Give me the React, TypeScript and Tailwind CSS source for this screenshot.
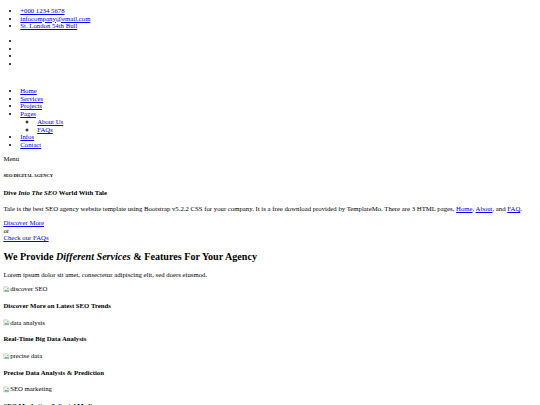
import React from "react";

const link = "text-[#0000ee] underline";

// chrome's broken image icon, shrunk
function BrokenImg({ alt }: { alt: string }) {
  return (
    <span className="inline">
      <svg
        viewBox="0 0 16 16"
        className="inline-block w-[1em] h-[1em] align-[-0.2em]"
      >
        <path d="M2 2h9l3 3v9H2z" fill="#f4f4f4" stroke="#9a9a9a" strokeWidth="1" />
        <path d="M3 13l4-5 3 3 2-2 2 4z" fill="#4caf50" />
        <circle cx="11" cy="6" r="1.5" fill="#6ea6d8" />
      </svg>
      {alt}
    </span>
  );
}

const services = [
  { img: "discover SEO", title: "Discover More on Latest SEO Trends" },
  { img: "data analysis", title: "Real-Time Big Data Analysis" },
  { img: "precise data", title: "Precise Data Analysis & Prediction" },
  { img: "SEO marketing", title: "SEO Marketing & Social Media" },
];

export default function App() {
  return (
    <div className="px-[0.5em] pb-[0.5em] font-['Liberation_Serif',serif] text-[6.75px] leading-[1.15] text-black bg-white min-h-screen">
      {/* pre-header */}
      <ul className="my-[1em] pl-[2.5em] list-disc">
        <li>
          <a href="#" className={link}>+000 1234 5678</a>
        </li>
        <li>
          <a href="#" className={link}>infocompany@email.com</a>
        </li>
        <li>
          <a href="#" className={link}>St. London 54th Bull</a>
        </li>
      </ul>
      <ul className="my-[1em] pl-[2.5em] list-disc">
        <li className="h-[1.15em]"><a href="#" /></li>
        <li className="h-[1.15em]"><a href="#" /></li>
        <li className="h-[1.15em]"><a href="#" /></li>
        <li className="h-[1.15em]"><a href="#" /></li>
      </ul>

      {/* header */}
      <a href="#" className="block h-[0.85em]" />
      <ul className="mt-[1em] mb-[0.85em] pl-[2.5em] list-disc">
        <li><a href="#" className={link}>Home</a></li>
        <li><a href="#" className={link}>Services</a></li>
        <li><a href="#" className={link}>Projects</a></li>
        <li>
          <a href="#" className={link}>Pages</a>
          <ul className="pl-[2.5em] list-[circle]">
            <li><a href="#" className={link}>About Us</a></li>
            <li><a href="#" className={link}>FAQs</a></li>
          </ul>
        </li>
        <li><a href="#" className={link}>Infos</a></li>
        <li><a href="#" className={link}>Contact</a></li>
      </ul>
      <a className="block">Menu</a>

      {/* banner */}
      <h6 className="text-[0.67em] font-bold my-[2.33em]">SEO DIGITAL AGENCY</h6>
      <h4 className="text-[1em] font-bold my-[1.33em]">
        Dive <em>Into The SEO</em> World With Tale
      </h4>
      <p className="mt-[1em] mb-[0.85em]">
        Tale is the best SEO agency website template using Bootstrap v5.2.2 CSS
        for your company. It is a free download provided by TemplateMo. There are
        3 HTML pages, <a href="#" className={link}>Home</a>,{" "}
        <a href="#" className={link}>About</a>, and{" "}
        <a href="#" className={link}>FAQ</a>.
      </p>
      <div>
        <a href="#" className={link}>Discover More</a>
      </div>
      <div>or</div>
      <div>
        <a href="#" className={link}>Check our FAQs</a>
      </div>

      {/* services */}
      <h2 className="text-[1.5em] font-bold my-[0.83em]">
        We Provide <em>Different Services</em> &amp; Features For Your Agency
      </h2>
      <p className="my-[1em]">
        Lorem ipsum dolor sit amet, consectetur adipiscing elit, sed doers eiusmod.
      </p>
      {services.map((s) => (
        <div key={s.img}>
          <BrokenImg alt={s.img} />
          <h4 className="text-[1em] font-bold my-[1.33em]">{s.title}</h4>
        </div>
      ))}
    </div>
  );
}
